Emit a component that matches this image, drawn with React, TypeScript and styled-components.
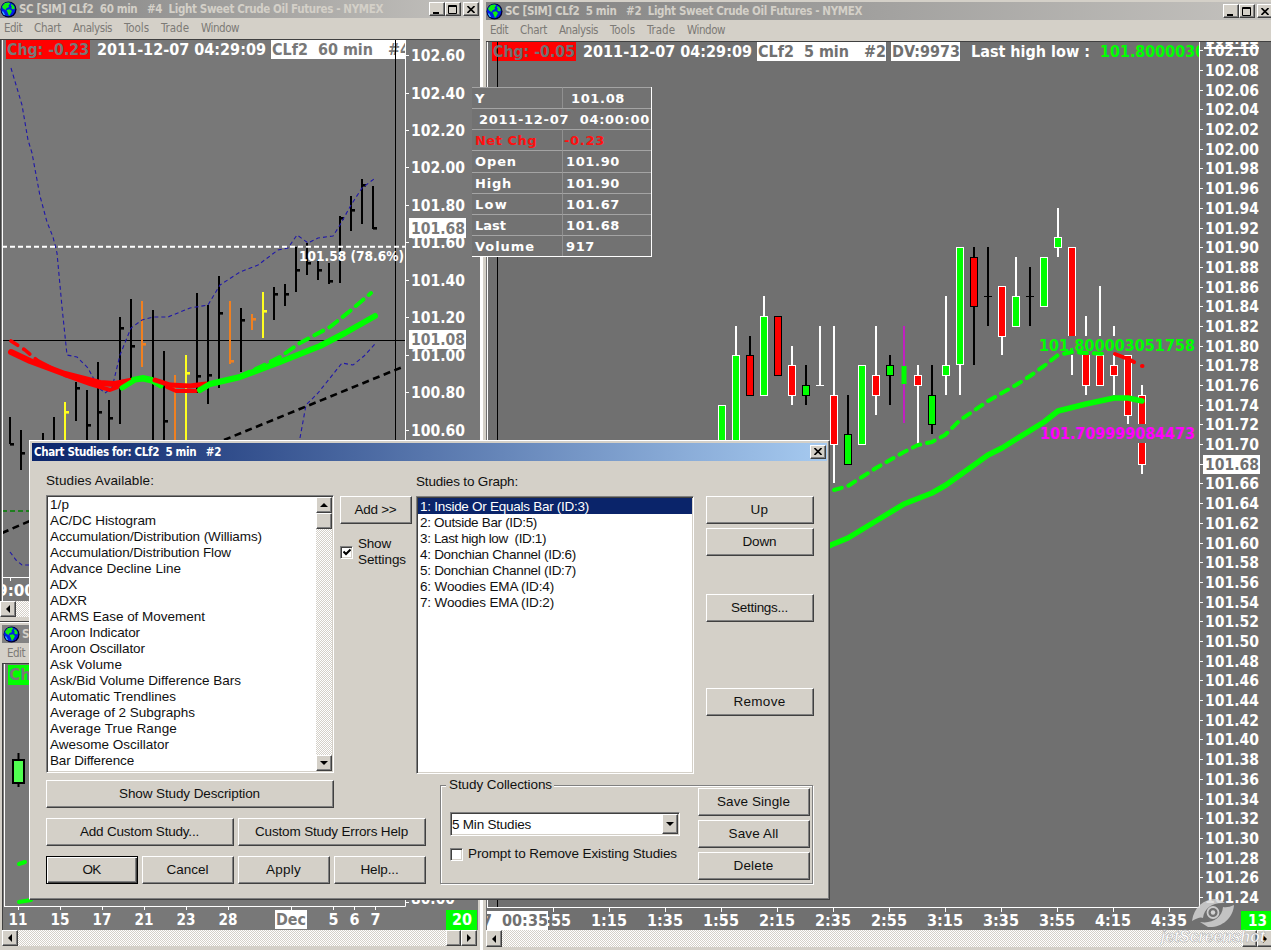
import React, { useLayoutEffect, useRef, useState } from "react";
import styled, { createGlobalStyle, css } from "styled-components";

const FACE = "#d4d0c8";
const UI = `"Liberation Sans", Arial, sans-serif`;
const TAHOMA = `"DejaVu Sans Condensed", "DejaVu Sans", Tahoma, sans-serif`;

const GlobalStyle = createGlobalStyle`
  * { box-sizing: border-box; }
  html, body { margin: 0; padding: 0; background: ${FACE}; overflow: hidden; }
  body { font-family: ${UI}; font-size: 13.5px; color: #101010; }
`;

const raised = css`
  border: 1px solid;
  border-color: #fff #404040 #404040 #fff;
  box-shadow: inset -1px -1px 0 #808080;
  background: ${FACE};
`;
const sunken = css`
  border: 1px solid;
  border-color: #808080 #fff #fff #808080;
  box-shadow: inset 1px 1px 0 #404040, inset -1px -1px 0 ${FACE};
  background: #fff;
`;

/* ---------- text set to a fixed advance width ---------- */
const FitSpan = styled.span`
  display: inline-block;
  white-space: pre;
  flex: none;
`;
function Fit({ w, children }: { w: number; children: string }) {
  const ref = useRef<HTMLSpanElement>(null);
  const [spacing, setSpacing] = useState(0);
  useLayoutEffect(() => {
    if (ref.current) {
      setSpacing((w - ref.current.getBoundingClientRect().width) / children.length);
    }
  }, []);
  return (
    <FitSpan ref={ref} style={{ letterSpacing: spacing }}>
      {children}
    </FitSpan>
  );
}

/* ---------- window parts ---------- */
const Desktop = styled.div`
  position: relative;
  width: 1271px;
  height: 950px;
  overflow: hidden;
  background: ${FACE};
`;
const WindowFrame = styled.section<{ $x: number; $y: number; $w: number; $h: number }>`
  position: absolute;
  left: ${(p) => p.$x}px;
  top: ${(p) => p.$y}px;
  width: ${(p) => p.$w}px;
  height: ${(p) => p.$h}px;
  display: flex;
  flex-direction: column;
  background: ${FACE};
  overflow: hidden;
`;
const LeftTop = styled(WindowFrame)`
  border-right: 2px solid #fff;
  border-bottom: 1px solid #404040;
`;
const RightMain = styled(WindowFrame)`
  padding: 2px 0 0 3px;
  border-left: 1px solid #fff;
`;
const LeftBottom = styled(WindowFrame)`
  padding: 2px 0 0 2px;
  border-top: 1px solid #fff;
  border-right: 2px solid #fff;
`;
const TitleBar = styled.header<{ $pad?: number }>`
  height: 18px;
  flex: none;
  display: flex;
  align-items: center;
  padding-left: ${(p) => p.$pad ?? 0}px;
  background: linear-gradient(90deg, #808080, #c4c2be);
  color: #d4d0c8;
  font: bold 11.5px ${TAHOMA};
`;
const TitleText = styled.span`
  flex: 1;
  padding-left: 2px;
`;
const Controls = styled.div<{ $end?: number }>`
  display: flex;
  flex: none;
  margin-right: ${(p) => p.$end ?? 0}px;
`;
const CaptionButton = styled.span<{ $gap?: boolean }>`
  ${raised}
  width: 16px;
  height: 14px;
  flex: none;
  display: flex;
  align-items: center;
  justify-content: center;
  margin-left: ${(p) => (p.$gap ? 2 : 0)}px;
`;
const MenuBar = styled.nav<{ $h: number; $pad: number; $lift: number }>`
  height: ${(p) => p.$h}px;
  flex: none;
  display: flex;
  gap: 12px;
  align-items: center;
  padding-left: ${(p) => p.$pad}px;
  padding-bottom: ${(p) => p.$lift}px;
  color: #7c7a76;
  font: 11.5px ${TAHOMA};
`;
const ChartBox = styled.div`
  flex: none;
  svg { display: block; }
`;
const ScrollTrack = styled.div<{ $h?: number; $w?: number }>`
  height: ${(p) => p.$h ?? 16}px;
  width: ${(p) => (p.$w ? p.$w + "px" : "auto")};
  flex: none;
  display: flex;
  justify-content: space-between;
  background: repeating-conic-gradient(#fff 0 25%, ${FACE} 0 50%) 0 0 / 2px 2px;
`;
const ScrollButton = styled.span<{ $w?: number; $h?: number }>`
  ${raised}
  width: ${(p) => p.$w ?? 16}px;
  height: ${(p) => p.$h ?? 16}px;
  flex: none;
  display: flex;
  align-items: center;
  justify-content: center;
`;
const ScrollEnd = styled.div<{ $out?: number }>`
  display: flex;
  margin-right: ${(p) => -(p.$out ?? 0)}px;
`;

function Close() {
  return (
    <svg width="8" height="7" viewBox="0 0 8 7">
      <path d="M0.5 0l7 7M7.5 0l-7 7" stroke="#000" strokeWidth="1.6" />
    </svg>
  );
}
function Arrow({ dir }: { dir: "left" | "right" | "up" | "down" }) {
  const d = { left: "M6 0v8L2 4z", right: "M2 0v8l4-4z", up: "M0 6h8L4 2z", down: "M0 2h8L4 6z" }[dir];
  return (
    <svg width="8" height="8" viewBox="0 0 8 8">
      <path d={d} fill="#000" />
    </svg>
  );
}
function Globe() {
  return (
    <svg width="17" height="17" viewBox="0 0 17 17">
      <circle cx="8.5" cy="8.5" r="8" fill="#000030" />
      <circle cx="8.2" cy="8.2" r="7" fill="#0020e8" />
      <path d="M2 5.500L5 2l4-.6 1.200 1.200L8.500 4.500 9 6 6.500 7.200 5.500 9 3 7.500z" fill="#10f010" />
      <path d="M6.500 9l3.500-.8 2 1.800-1.200 2.400L9 15l-1.200-3z" fill="#10f010" />
      <path d="M11.500 3l2.500 2 .8 2.600-1.800 1-1.800-1.400.6-1.700-1-1z" fill="#10f010" />
      <path d="M2.500 10.500l2 3.500" stroke="#38c8ff" strokeWidth="1.200" />
    </svg>
  );
}
function CaptionButtons({ end }: { end?: number }) {
  return (
    <Controls $end={end}>
      <CaptionButton>
        <svg width="10" height="9" viewBox="0 0 10 9"><path d="M1 7h6v2H1z" /></svg>
      </CaptionButton>
      <CaptionButton>
        <svg width="10" height="9" viewBox="0 0 10 9">
          <path d="M.5 .5h8v8h-8zM.5 1.5h8" fill="none" stroke="#000" />
        </svg>
      </CaptionButton>
      <CaptionButton $gap><Close /></CaptionButton>
    </Controls>
  );
}
const MENU: [string, number][] = [["Edit", 18], ["Chart", 27], ["Analysis", 39], ["Tools", 25], ["Trade", 28], ["Window", 38]];
function Menu({ h, pad, lift = 0 }: { h: number; pad: number; lift?: number }) {
  return (
    <MenuBar $h={h} $pad={pad} $lift={lift}>
      {MENU.map(([t, w]) => <Fit key={t} w={w}>{t}</Fit>)}
    </MenuBar>
  );
}

/* ---------- chart primitives ---------- */
interface LabelProps { x: number; y: number; w: number; fill?: string; size?: number; children: string }
function Label({ x, y, w, fill = "#fff", size = 16.6, children }: LabelProps) {
  return (
    <text x={x} y={y + size * 0.32} textLength={w} lengthAdjust="spacingAndGlyphs" fill={fill}
      fontFamily={TAHOMA} fontSize={size} fontWeight="bold">
      {children.replace(/ /g, "\u00a0")}
    </text>
  );
}

type Bar = [x: number, high: number, low: number, close?: number, color?: string];
const O = "#f08020";
const Y = "#ffff20";
const BARS: Bar[] = [
  [10, 417, 444, 443], [21, 430, 470, 452], [43, 433, 445], [54, 417, 445], [65, 402, 445, 411, Y],
  [76, 382, 421, 387], [87, 390, 445, 424], [98, 362, 445, 411], [109, 400, 445, 417], [120, 317, 424, 327],
  [131, 299, 380, 345], [142, 301, 367, 343, O], [153, 310, 445], [164, 351, 445, 420], [175, 375, 445, undefined, O],
  [186, 355, 445, 372, Y], [197, 293, 393, 375], [208, 305, 404, 374], [219, 276, 388, 312], [230, 301, 364, 360, O],
  [241, 308, 372, 319], [252, 314, 330, 318, O], [263, 292, 338, 310, Y], [274, 287, 320, 293], [285, 284, 306, 293],
  [296, 247, 292, 269], [307, 243, 275, 262], [318, 259, 280, 269], [329, 263, 284, 280], [340, 216, 283, 217],
  [351, 196, 231, 209], [362, 179, 224, 184], [373, 186, 229, 227],
];
const LEFT_PRICES: [string, number][] = [
  ["102.60", 56], ["102.40", 94], ["102.20", 131], ["102.00", 168], ["101.80", 206], ["101.60", 243],
  ["101.40", 281], ["101.20", 318], ["101.00", 356], ["100.80", 393], ["100.60", 431],
];

function HourChart() {
  return (
    <svg width="480" height="562" viewBox="0 39 480 562">
      <rect x="0" y="39" width="480" height="562" fill="#787878" />
      <path d="M0 39.5H480M.5 39V601" stroke="#404040" />
      <rect x="6" y="40" width="84" height="19" fill="#f00" />
      <Label x={7} y={50} w={82} fill="#787878">Chg: -0.23</Label>
      <Label x={97} y={50} w={169}>2011-12-07 04:29:09</Label>
      <clipPath id="plotA"><rect x="2" y="40" width="403" height="537" /></clipPath>
      <g clipPath="url(#plotA)">
        <rect x="271" y="40" width="140" height="19" fill="#fff" />
        <Label x={272} y={50} w={138} fill="#787878">CLf2  60 min   #4</Label>
        <path d="M395.5 40V577M2 340.5H405" stroke="#000" />
        {BARS.map(([x, h, l, c, col]) => (
          <g key={x} fill={col ?? "#000"}>
            <rect x={x - 1} y={h} width="2" height={l - h} />
            {c !== undefined && <rect x={x} y={c} width="4" height="2.6" />}
          </g>
        ))}
        <g fill="none" stroke="#2018a8" strokeWidth="1.1" strokeDasharray="4 3">
          <path d="M11 68L22 105 28 140 32 153 40 196 47 222 53 237 57 253 62 307 67 355 77 357 88 368 98 387 105 393 112 388 120 355 131 328 142 320 153 317 168 317 190 308 208 305 220 285 240 272 258 265 278 250 288 248 297 235 308 243 318 238 333 236 340 225 351 205 362 188 374 179" />
          <path d="M300 438L306 405 318 393 330 378 342 363 353 365 364 356 375 344M10 552L16 560 22 565H30" />
        </g>
        <path d="M2 246.7H405" stroke="#fff" strokeWidth="2" strokeDasharray="5 3" />
        <path d="M224 440L405 366M2 533L32 520" stroke="#000" strokeWidth="2.6" strokeDasharray="7 4.5" />
        <path d="M2 511H30" stroke="#008000" strokeWidth="1.5" strokeDasharray="5 3" />
        <g fill="none" strokeLinecap="round" strokeLinejoin="round">
          <path d="M11 341L25 350 38 361" stroke="#f00" strokeWidth="3.6" strokeDasharray="8 7" />
          <path d="M36 360L65 375 90 384 110 390 118 387" stroke="#f00" strokeWidth="4" />
          <path d="M11 352L30 361 65 374 100 383 115 384 130 381" stroke="#f00" strokeWidth="6" />
          <path d="M122 388L135 380 143 379 152 381 161 386" stroke="#0f0" strokeWidth="5" />
          <path d="M133 379L143 377 152 379" stroke="#0f0" strokeWidth="4" />
          <path d="M155 380L170 385 190 386 206 384" stroke="#f00" strokeWidth="5" />
          <path d="M167 387L176 391 196 391" stroke="#f00" strokeWidth="4" />
          <path d="M200 390L210 384 240 377 280 362 320 346 345 333 375 316" stroke="#0f0" strokeWidth="6" />
          <path d="M240 376L262 366 280 357 300 343 330 327 350 311 371 293" stroke="#0f0" strokeWidth="4" strokeDasharray="10 7" />
        </g>
        <Label x={299} y={257} w={105} size={14}>101.58 (78.6%)</Label>
      </g>
      <path d="M2.5 40V601M2 577.5H405.5V40M10.5 577v4" stroke="#fff" fill="none" />
      <rect x="409" y="218" width="57" height="20" fill="#fff" />
      <Label x={411} y={228.5} w={54} fill="#787878">101.68</Label>
      {LEFT_PRICES.map(([t, y]) => (
        <g key={t}>
          <path d={`M405 ${y - 0.5}h4`} stroke="#fff" />
          <Label x={411} y={y} w={54}>{t}</Label>
        </g>
      ))}
      <rect x="409" y="330" width="57" height="19" fill="#fff" />
      <Label x={411} y={340} w={54} fill="#787878">101.08</Label>
      <clipPath id="timeA"><rect x="2" y="578" width="40" height="22" /></clipPath>
      <g clipPath="url(#timeA)"><Label x={-3} y={591} w={38}>9:00</Label></g>
    </svg>
  );
}

type Candle = [x: number, high: number, low: number, top: number, bottom: number, fill: string, line: string];
const G = "#00ff00";
const R = "#ff0000";
const W = "#ffffff";
const K = "#000000";
const M = "#c020c0";
const CANDLES: Candle[] = [
  [722, 405, 445, 405, 450, G, W], [736, 326, 445, 355, 450, G, W], [750, 336, 396, 355, 396, R, K],
  [764, 296, 396, 316, 396, G, W], [778, 316, 376, 316, 376, R, K], [792, 346, 405, 365, 396, R, W],
  [806, 365, 405, 385, 396, G, K], [820, 326, 386, 385, 386, W, W], [834, 326, 483, 395, 445, R, W],
  [848, 395, 465, 434, 465, G, K], [862, 365, 445, 365, 445, G, W], [876, 326, 415, 375, 396, R, W],
  [890, 355, 405, 365, 376, G, K], [904, 326, 423, 366, 384, G, M], [918, 365, 444, 375, 386, R, W],
  [932, 365, 434, 395, 425, G, K], [946, 296, 395, 365, 376, G, W], [960, 247, 395, 247, 365, G, W],
  [974, 247, 365, 257, 307, R, K], [988, 247, 326, 296, 297, K, K], [1002, 286, 355, 286, 337, R, W],
  [1016, 257, 327, 296, 327, G, W], [1030, 267, 326, 296, 297, K, K], [1044, 257, 307, 257, 307, G, W],
  [1058, 208, 257, 237, 248, G, W], [1072, 247, 375, 247, 355, R, W], [1086, 316, 395, 354, 386, R, W],
  [1100, 286, 386, 355, 386, R, W], [1114, 326, 395, 365, 376, R, W], [1128, 355, 424, 355, 416, R, W],
  [1142, 385, 474, 395, 465, R, W],
];
const RIGHT_TIMES = ["12:55", "1:15", "1:35", "1:55", "2:15", "2:35", "2:55", "3:15", "3:35", "3:55", "4:15", "4:35"];

function CandleMark({ c: [x, h, l, t, b, fill, line] }: { c: Candle }) {
  const flat = b - t <= 1;
  return (
    <g>
      <rect x={x - 1} y={h} width="2" height={l - h} fill={line} />
      {flat && <rect x={x - 4} y={t} width="8" height="1" fill={line} />}
      {!flat && line === M && <rect x={x - 2.5} y={t} width="5" height={b - t} fill={fill} />}
      {!flat && line !== M && (
        <rect x={x - 3.5} y={t + 0.5} width="7" height={b - t - 1} fill={fill} stroke={line} />
      )}
    </g>
  );
}

function MinuteChart() {
  const bg = "#707070";
  return (
    <svg width="785" height="889" viewBox="486 41 785 889">
      <rect x="486" y="41" width="785" height="889" fill={bg} />
      <path d="M486 41.5H1271" stroke="#404040" />
      <clipPath id="plotB"><rect x="486" y="42" width="713" height="866" /></clipPath>
      <g clipPath="url(#plotB)">
        <rect x="492" y="42" width="84" height="19" fill="#f00" />
        <path d="M497.5 42V908" stroke="#000" />
        <Label x={493} y={52} w={82} fill={bg}>Chg: -0.05</Label>
        <Label x={583} y={52} w={169}>2011-12-07 04:29:09</Label>
        <rect x="757" y="42" width="129" height="19" fill="#fff" />
        <Label x={758} y={52} w={128} fill={bg}>CLf2  5 min   #2</Label>
        <rect x="891" y="42" width="69" height="19" fill="#fff" />
        <Label x={892} y={52} w={68} fill={bg}>DV:9973</Label>
        <Label x={971} y={52} w={119}>Last high low :</Label>
        <Label x={1100} y={52} w={155} fill={G}>101.800003051758</Label>
        {CANDLES.map((c) => <CandleMark key={c[0]} c={c} />)}
        <rect x="1040" y="336" width="154" height="19" fill={bg} />
        <rect x="1040" y="424" width="154" height="19" fill={bg} />
        <g fill="none" strokeLinecap="round" strokeLinejoin="round">
          <path d="M834 490L848 486 862 477 876 468 890 460 904 452 918 445 932 442 945 435 960 420 975 410 988 401 1002 393 1016 385 1030 376 1044 366 1058 355 1072 352 1086 353 1108 354" stroke={G} strokeWidth="4" strokeDasharray="8 7" />
          <path d="M1115 354L1128 359 1134 362M1142 366h.5" stroke={R} strokeWidth="4" />
          <path d="M825 548L831 545 848 538 876 521 904 504 932 493 946 485 988 455 1002 448 1044 422 1058 411 1086 404 1114 398 1128 398 1142 401" stroke={G} strokeWidth="5.5" />
        </g>
        <Label x={1039} y={346} w={156} fill={G}>101.800003051758</Label>
        <Label x={1040} y={434} w={155} fill="#f0f">101.709999084473</Label>
      </g>
      <path d="M487.5 42V908M487 907.5H1199.5V42" stroke="#fff" fill="none" />
      <clipPath id="axisB"><rect x="1199" y="42" width="72" height="888" /></clipPath>
      <g clipPath="url(#axisB)">
        <Label x={1205} y={39} w={54}>102.12</Label>
        <rect x="1204" y="47" width="55" height="2" fill="#fff" />
        {Array.from({ length: 44 }, (_, i) => {
          const y = 51.3 + i * 19.69;
          return (
            <g key={i}>
              <path d={`M1199 ${Math.round(y) - 0.5}h4`} stroke="#fff" />
              {i !== 21 && <Label x={1205} y={Math.round(y)} w={54}>{(102.1 - i * 0.02).toFixed(2)}</Label>}
            </g>
          );
        })}
        <rect x="1203" y="455" width="57" height="19" fill="#fff" />
        <Label x={1205} y={465} w={54} fill={bg}>101.68</Label>
      </g>
      {RIGHT_TIMES.map((t, i) => (
        <g key={t}>
          <path d={`M${553.5 + i * 56} 907v5`} stroke="#fff" />
          <Label x={(i === 0 ? 525 : 535) + i * 56} y={921} w={i === 0 ? 46 : 36}>{t}</Label>
        </g>
      ))}
      <rect x="487" y="911" width="61" height="19" fill="#fff" />
      <clipPath id="dateB"><rect x="487" y="911" width="61" height="19" /></clipPath>
      <g clipPath="url(#dateB)">
        <Label x={482} y={921} w={10} fill={bg}>7</Label>
        <Label x={502} y={921} w={46} fill={bg}>00:35</Label>
      </g>
      <rect x="1241" y="911" width="30" height="19" fill={G} />
      <Label x={1248} y={921} w={19}>13</Label>
    </svg>
  );
}

const DATES: [string, number][] = [["11", 18], ["15", 60], ["17", 102], ["21", 144], ["23", 186], ["28", 228], ["5", 333], ["6", 354], ["7", 375]];
function DayChart() {
  return (
    <svg width="476" height="267" viewBox="2 663 476 267">
      <rect x="2" y="663" width="476" height="267" fill="#787878" />
      <path d="M2 663.5H480M2.5 663V930" stroke="#404040" />
      <rect x="8" y="665" width="82" height="20" fill={G} />
      <Label x={9} y={675} w={82} fill="#787878">Chg: 1.35</Label>
      <path d="M18.5 753v34" stroke="#000" strokeWidth="2" />
      <rect x="13" y="760" width="11" height="23" fill="#50ff50" stroke="#000" strokeWidth="2" />
      <path d="M19 864l6-2M19 902l12-2" stroke="#0f0" strokeWidth="4" strokeLinecap="round" />
      <clipPath id="plotC"><rect x="405" y="890" width="70" height="15" /></clipPath>
      <g clipPath="url(#plotC)"><Label x={411} y={899} w={44}>80.00</Label></g>
      <path d="M4.5 664V907M4 906.5H405.5V880M405 902.5h4" stroke="#fff" fill="none" />
      {DATES.map(([t, x]) => (
        <g key={t}>
          <path d={`M${x + 0.5} 906v4`} stroke="#fff" />
          <Label x={x - (t.length > 1 ? 9.5 : 4.5)} y={920} w={t.length > 1 ? 19 : 10}>{t}</Label>
        </g>
      ))}
      <path d="M291.500 906v4" stroke="#fff" />
      <rect x="275" y="910" width="32" height="19" fill="#fff" />
      <Label x={276} y={920} w={30} fill="#787878">Dec</Label>
      <rect x="446" y="910" width="31" height="20" fill={G} />
      <Label x={452} y={920} w={20}>20</Label>
    </svg>
  );
}

/* ---------- data readout ---------- */
const Readout = styled.table`
  position: absolute;
  left: 472px;
  top: 87px;
  width: 180px;
  height: 170px;
  table-layout: fixed;
  border-collapse: separate;
  border-spacing: 0;
  background: #727272;
  border-right: 1px solid #fff;
  border-bottom: 1px solid #fff;
  color: #fff;
  font: bold 13px "DejaVu Sans", Verdana, sans-serif;
`;
const ReadRow = styled.tr<{ $red?: boolean }>`
  color: ${(p) => (p.$red ? "#ff1010" : "#fff")};
  height: 21px;
`;
const ReadCell = styled.td<{ $pad?: number; $w?: number }>`
  padding: 1px 0 0 ${(p) => p.$pad ?? 3}px;
  width: ${(p) => (p.$w ? p.$w + "px" : "auto")};
  height: 21px;
  line-height: 19px;
  border-top: 1px solid #a4a4a4;
  white-space: pre;
  & + & { border-left: 1px solid #909090; }
`;
const ROWS: [string, number, string, number][] = [
  ["Net Chg", 62, "-0.23", 41], ["Open", 42, "101.90", 54], ["High", 37, "101.90", 54],
  ["Low", 33, "101.67", 54], ["Last", 31, "101.68", 54], ["Volume", 60, "917", 29],
];

/* ---------- dialog ---------- */
const Dialog = styled.section`
  position: absolute;
  left: 29px;
  top: 440px;
  width: 801px;
  height: 460px;
  padding: 2px;
  background: ${FACE};
  border: 1px solid;
  border-color: #fff #404040 #404040 #fff;
  box-shadow: inset -1px -1px 0 #808080;
`;
const DialogTitle = styled.header`
  height: 18px;
  display: flex;
  align-items: center;
  justify-content: space-between;
  padding: 0 1px 1px 2px;
  background: linear-gradient(90deg, #0a246a, #a6caf0);
  color: #fff;
  font: bold 11.5px ${TAHOMA};
`;
const DialogBody = styled.div`
  padding: 12px 0 0 14px;
`;
const Upper = styled.div`
  display: flex;
  align-items: flex-start;
  height: 306px;
`;
const Column = styled.div<{ $w: number; $ml?: number; $pt?: number }>`
  width: ${(p) => p.$w}px;
  margin-left: ${(p) => p.$ml ?? 0}px;
  padding-top: ${(p) => p.$pt ?? 0}px;
  flex: none;
  display: flex;
  flex-direction: column;
`;
const Caption = styled.div<{ $h: number }>`
  height: ${(p) => p.$h}px;
  line-height: 16px;
  flex: none;
`;
const ListBox = styled.div<{ $h: number; $top?: number }>`
  ${sunken}
  height: ${(p) => p.$h}px;
  padding: ${(p) => p.$top ?? 1}px 1px 1px;
  display: flex;
  overflow: hidden;
`;
const Items = styled.ul`
  list-style: none;
  margin: 0;
  padding: 0;
  flex: 1;
  overflow: hidden;
`;
const Item = styled.li<{ $on?: boolean }>`
  height: 16px;
  line-height: 17px;
  padding-left: 2px;
  white-space: pre;
  background: ${(p) => (p.$on ? "#0a246a" : "transparent")};
  color: ${(p) => (p.$on ? "#fff" : "#101010")};
`;
const VScroll = styled.div<{ $mt?: number }>`
  width: 16px;
  margin-top: ${(p) => p.$mt ?? 0}px;
  display: flex;
  flex-direction: column;
  justify-content: space-between;
  background: repeating-conic-gradient(#fff 0 25%, ${FACE} 0 50%) 0 0 / 2px 2px;
`;
const Button = styled.button<{ $w: number; $h?: number; $mt?: number; $primary?: boolean }>`
  ${raised}
  width: ${(p) => p.$w}px;
  height: ${(p) => p.$h ?? 28}px;
  margin: ${(p) => p.$mt ?? 0}px 0 0;
  padding: 0 1px 2px 0;
  flex: none;
  font: 13.5px ${UI};
  color: #101010;
  ${(p) => p.$primary && css`
    border-color: #000;
    box-shadow: inset 1px 1px 0 #fff, inset -1px -1px 0 #404040, inset -2px -2px 0 #808080;
  `}
`;
const CheckRow = styled.div<{ $mt: number; $gap: number }>`
  display: flex;
  align-items: center;
  gap: ${(p) => p.$gap}px;
  margin-top: ${(p) => p.$mt}px;
  line-height: 16px;
`;
const CheckBox = styled.span`
  ${sunken}
  width: 13px;
  height: 13px;
  flex: none;
  display: flex;
  align-items: center;
  justify-content: center;
`;
const CheckText = styled.span`
  display: flex;
  flex-direction: column;
  align-items: flex-start;
`;
const Lower = styled.div`
  display: flex;
  align-items: flex-start;
`;
const Actions = styled.div`
  width: 380px;
  padding-top: 1px;
  display: flex;
  flex-direction: column;
  gap: 10px;
`;
const ButtonRow = styled.div`
  display: flex;
  gap: 4px;
`;
const Group = styled.fieldset`
  position: relative;
  margin: 6px 0 0 14px;
  width: 373px;
  height: 99px;
  border: 1px solid #808080;
  box-shadow: 1px 1px 0 #fff, inset 1px 1px 0 #fff;
  padding: 2px 2px 0 9px;
  display: flex;
  justify-content: space-between;
`;
const Legend = styled.span`
  position: absolute;
  left: 5px;
  top: -9px;
  padding: 0 2px 0 3px;
  line-height: 16px;
  background: ${FACE};
`;
const GroupLeft = styled.div`
  padding-top: 24px;
`;
const Combo = styled.div`
  ${sunken}
  width: 230px;
  height: 24px;
  padding: 2px 1px 2px 1px;
  display: flex;
  align-items: center;
  justify-content: space-between;
`;
const GroupButtons = styled.div`
  display: flex;
  flex-direction: column;
  gap: 4px;
`;

const AVAILABLE: [string, number][] = [
  ["1/p", 19], ["AC/DC Histogram", 106], ["Accumulation/Distribution (Williams)", 212],
  ["Accumulation/Distribution Flow", 181], ["Advance Decline Line", 131], ["ADX", 27], ["ADXR", 37],
  ["ARMS Ease of Movement", 155], ["Aroon Indicator", 90], ["Aroon Oscillator", 95], ["Ask Volume", 72],
  ["Ask/Bid Volume Difference Bars", 191], ["Automatic Trendlines", 126], ["Average of 2 Subgraphs", 145],
  ["Average True Range", 127], ["Awesome Oscillator", 119], ["Bar Difference", 84], ["Bar End Time", 78],
];
const GRAPHED: [string, number][] = [
  ["1: Inside Or Equals Bar (ID:3)", 169], ["2: Outside Bar (ID:5)", 117], ["3: Last high low  (ID:1)", 126],
  ["4: Donchian Channel (ID:6)", 156], ["5: Donchian Channel (ID:7)", 156], ["6: Woodies EMA (ID:4)", 134],
  ["7: Woodies EMA (ID:2)", 134],
];

function StudiesDialog() {
  return (
    <Dialog>
      <DialogTitle>
        <Fit w={187}>{"Chart Studies for: CLf2  5 min   #2"}</Fit>
        <CaptionButton><Close /></CaptionButton>
      </DialogTitle>
      <DialogBody>
        <Upper>
          <Column $w={288}>
            <Caption $h={22}><Fit w={108}>Studies Available:</Fit></Caption>
            <ListBox $h={278} $top={0}>
              <Items>
                {AVAILABLE.map(([t, w]) => <Item key={t}><Fit w={w}>{t}</Fit></Item>)}
              </Items>
              <VScroll $mt={1}>
                <div>
                  <ScrollButton><Arrow dir="up" /></ScrollButton>
                  <ScrollButton />
                </div>
                <ScrollButton><Arrow dir="down" /></ScrollButton>
              </VScroll>
            </ListBox>
          </Column>
          <Column $w={72} $ml={6} $pt={23}>
            <Button $w={72}><Fit w={42}>{"Add >>"}</Fit></Button>
            <CheckRow $mt={12} $gap={5}>
              <CheckBox>
                <svg width="8" height="8" viewBox="0 0 8 8">
                  <path d="M.5 3.5L3 6l4.500-4.500" fill="none" stroke="#000" strokeWidth="2" />
                </svg>
              </CheckBox>
              <CheckText><Fit w={33}>Show</Fit><Fit w={48}>Settings</Fit></CheckText>
            </CheckRow>
          </Column>
          <Column $w={278} $ml={4} $pt={1}>
            <Caption $h={22}><Fit w={102}>Studies to Graph:</Fit></Caption>
            <ListBox $h={278}>
              <Items>
                {GRAPHED.map(([t, w], i) => <Item key={t} $on={i === 0}><Fit w={w}>{t}</Fit></Item>)}
              </Items>
            </ListBox>
          </Column>
          <Column $w={108} $ml={12} $pt={23}>
            <Button $w={108}><Fit w={18}>Up</Fit></Button>
            <Button $w={108} $mt={4}><Fit w={34}>Down</Fit></Button>
            <Button $w={108} $mt={38}><Fit w={57}>Settings...</Fit></Button>
            <Button $w={108} $mt={66}><Fit w={52}>Remove</Fit></Button>
          </Column>
        </Upper>
        <Lower>
          <Actions>
            <Button $w={288}><Fit w={141}>Show Study Description</Fit></Button>
            <ButtonRow>
              <Button $w={188}><Fit w={119}>Add Custom Study...</Fit></Button>
              <Button $w={188}><Fit w={153}>Custom Study Errors Help</Fit></Button>
            </ButtonRow>
            <ButtonRow>
              <Button $w={92} $primary><Fit w={18}>OK</Fit></Button>
              <Button $w={92}><Fit w={42}>Cancel</Fit></Button>
              <Button $w={92}><Fit w={35}>Apply</Fit></Button>
              <Button $w={92}><Fit w={38}>Help...</Fit></Button>
            </ButtonRow>
          </Actions>
          <Group>
            <Legend><Fit w={103}>Study Collections</Fit></Legend>
            <GroupLeft>
              <Combo>
                <Fit w={79}>5 Min Studies</Fit>
                <ScrollButton $h={20}><Arrow dir="down" /></ScrollButton>
              </Combo>
              <CheckRow $mt={10} $gap={5}>
                <CheckBox />
                <Fit w={209}>Prompt to Remove Existing Studies</Fit>
              </CheckRow>
            </GroupLeft>
            <GroupButtons>
              <Button $w={112}><Fit w={73}>Save Single</Fit></Button>
              <Button $w={112}><Fit w={50}>Save All</Fit></Button>
              <Button $w={112}><Fit w={40}>Delete</Fit></Button>
            </GroupButtons>
          </Group>
        </Lower>
      </DialogBody>
    </Dialog>
  );
}

const Watermark = styled.div`
  position: absolute;
  left: 1160px;
  top: 898px;
  pointer-events: none;
`;

export default function App() {
  return (
    <Desktop>
      <GlobalStyle />
      <LeftTop $x={0} $y={0} $w={482} $h={622}>
        <TitleBar>
          <Globe />
          <TitleText><Fit w={364}>{"SC [SIM] CLf2  60 min   #4  Light Sweet Crude Oil Futures - NYMEX"}</Fit></TitleText>
          <CaptionButtons end={1} />
        </TitleBar>
        <Menu h={21} pad={4} lift={1} />
        <ChartBox><HourChart /></ChartBox>
        <ScrollTrack $w={478}>
          <ScrollButton><Arrow dir="left" /></ScrollButton>
        </ScrollTrack>
      </LeftTop>
      <LeftBottom $x={0} $y={622} $w={482} $h={328}>
        <TitleBar $pad={1}>
          <Globe />
          <TitleText>SC [SIM] CLf2</TitleText>
        </TitleBar>
        <Menu h={20} pad={5} lift={0} />
        <ChartBox><DayChart /></ChartBox>
        <ScrollTrack $w={475}>
          <ScrollButton><Arrow dir="left" /></ScrollButton>
          <ScrollEnd>
            <ScrollButton $w={15} />
            <ScrollButton><Arrow dir="right" /></ScrollButton>
          </ScrollEnd>
        </ScrollTrack>
      </LeftBottom>
      <RightMain $x={482} $y={0} $w={789} $h={950}>
        <TitleBar>
          <Globe />
          <TitleText><Fit w={357}>{"SC [SIM] CLf2  5 min   #2  Light Sweet Crude Oil Futures - NYMEX"}</Fit></TitleText>
          <CaptionButtons end={-2} />
        </TitleBar>
        <Menu h={21} pad={4} lift={1} />
        <ChartBox><MinuteChart /></ChartBox>
        <ScrollTrack $h={17}>
          <ScrollButton $h={17}><Arrow dir="left" /></ScrollButton>
          <ScrollEnd $out={2}>
            <ScrollButton $w={15} $h={17} />
            <ScrollButton $h={17}><Arrow dir="right" /></ScrollButton>
          </ScrollEnd>
        </ScrollTrack>
      </RightMain>

      <Readout>
        <tbody>
          <ReadRow>
            <ReadCell $w={90}>Y</ReadCell>
            <ReadCell $pad={8}><Fit w={54}>101.08</Fit></ReadCell>
          </ReadRow>
          <ReadRow>
            <ReadCell colSpan={2} $pad={7}><Fit w={171}>{"2011-12-07  04:00:00"}</Fit></ReadCell>
          </ReadRow>
          {ROWS.map(([k, kw, v, vw]) => (
            <ReadRow key={k} $red={k === "Net Chg"}>
              <ReadCell><Fit w={kw}>{k}</Fit></ReadCell>
              <ReadCell $pad={k === "Net Chg" ? 1 : 3}><Fit w={vw}>{v}</Fit></ReadCell>
            </ReadRow>
          ))}
        </tbody>
      </Readout>

      <StudiesDialog />

      <Watermark>
        <svg width="111" height="50" viewBox="1160 898 111 50">
          <g fill="#d8d8d8" opacity=".8">
            <path d="M1192 921C1194 906 1205 898 1218 899L1225 903C1213 902 1204 908 1203 918Q1200 916 1192 921z" />
            <path d="M1234 905C1233 919 1221 928 1208 927L1200 922C1212 924 1222 918 1223 907Q1228 908 1234 905z" />
          </g>
          <g fill="none" stroke="#e4e4e4" opacity=".8" strokeLinecap="round">
            <circle cx="1213" cy="912.500" r="5.500" strokeWidth="1.800" />
          </g>
          <circle cx="1213" cy="912.500" r="2.200" fill="#eee" opacity=".8" />
          <text x="1161" y="942" textLength="104" lengthAdjust="spacingAndGlyphs" fontFamily="Liberation Sans, sans-serif"
            fontStyle="italic" fontWeight="bold" fontSize="16" fill="#fff" stroke="#a8a8a8" strokeWidth=".5">
            jetScreenshot
          </text>
        </svg>
      </Watermark>
    </Desktop>
  );
}
